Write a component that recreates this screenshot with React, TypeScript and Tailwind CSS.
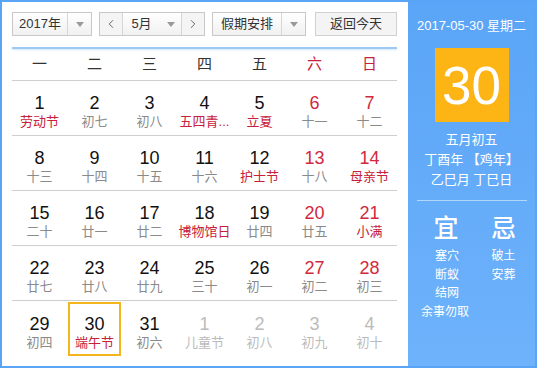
import { ChevronLeft, ChevronRight } from "lucide-react";

type Day = { n: number; sub: string; red?: boolean; subRed?: boolean; other?: boolean; today?: boolean };

const weekDays = ["一", "二", "三", "四", "五", "六", "日"];

const rows: Day[][] = [
    [
        { n: 1, sub: "劳动节", subRed: true },
        { n: 2, sub: "初七" },
        { n: 3, sub: "初八" },
        { n: 4, sub: "五四青...", subRed: true },
        { n: 5, sub: "立夏", subRed: true },
        { n: 6, sub: "十一", red: true },
        { n: 7, sub: "十二", red: true },
    ],
    [
        { n: 8, sub: "十三" },
        { n: 9, sub: "十四" },
        { n: 10, sub: "十五" },
        { n: 11, sub: "十六" },
        { n: 12, sub: "护士节", subRed: true },
        { n: 13, sub: "十八", red: true },
        { n: 14, sub: "母亲节", red: true, subRed: true },
    ],
    [
        { n: 15, sub: "二十" },
        { n: 16, sub: "廿一" },
        { n: 17, sub: "廿二" },
        { n: 18, sub: "博物馆日", subRed: true },
        { n: 19, sub: "廿四" },
        { n: 20, sub: "廿五", red: true },
        { n: 21, sub: "小满", red: true, subRed: true },
    ],
    [
        { n: 22, sub: "廿七" },
        { n: 23, sub: "廿八" },
        { n: 24, sub: "廿九" },
        { n: 25, sub: "三十" },
        { n: 26, sub: "初一" },
        { n: 27, sub: "初二", red: true },
        { n: 28, sub: "初三", red: true },
    ],
    [
        { n: 29, sub: "初四" },
        { n: 30, sub: "端午节", subRed: true, today: true },
        { n: 31, sub: "初六" },
        { n: 1, sub: "儿童节", other: true },
        { n: 2, sub: "初八", other: true },
        { n: 3, sub: "初九", other: true },
        { n: 4, sub: "初十", other: true },
    ],
];

const Caret = () => (
    <span className="w-0 h-0 border-l-[4px] border-r-[4px] border-t-[5px] border-l-transparent border-r-transparent border-t-[#999]" />
);

const DayCell = ({ day }: { day: Day }) => {
    const numColor = day.other ? "text-[#bbbbbb]" : day.red ? "text-[#d2283e]" : "text-[#111]";
    const subColor = day.other ? "text-[#bbbbbb]" : day.subRed ? "text-[#c8203a]" : "text-[#8a8a8a]";
    return (
        <div className="flex items-center justify-center h-full">
            <div
                className={`flex flex-col items-center w-[53px] h-[54px] pt-[9px] border-2 ${
                    day.today ? "border-[#f3b71b]" : "border-transparent"
                }`}
            >
                <span className={`text-[18px] leading-[22px] ${numColor}`}>{day.n}</span>
                <span className={`text-[13px] leading-[18px] mt-[-1px] whitespace-nowrap ${subColor}`}>{day.sub}</span>
            </div>
        </div>
    );
};

const App = () => {
    return (
        <div
            className="w-[537px] h-[368px] border-2 border-[#5aa4f6] flex bg-white"
            style={{ fontFamily: '"Liberation Sans", "Noto Sans CJK SC", sans-serif' }}
        >
            {/* Calendar */}
            <div className="w-[406px] pl-[10px] pr-[11px] pt-[10px]">
                <div className="flex items-center h-[24px] text-[13px] text-[#333]">
                    <div className="flex h-[24px] w-[80px] border border-[#c8c8c8] bg-gradient-to-b from-white to-[#f1f1f1]">
                        <span className="flex-1 flex items-center justify-center">2017年</span>
                        <span className="w-[24px] border-l border-[#d6d6d6] flex items-center justify-center">
                            <Caret />
                        </span>
                    </div>
                    <div className="flex h-[24px] w-[106px] ml-[7px] border border-[#c8c8c8] bg-gradient-to-b from-white to-[#f1f1f1]">
                        <span className="w-[23px] border-r border-[#d6d6d6] flex items-center justify-center bg-[#f4f4f4]">
                            <ChevronLeft size={14} strokeWidth={1.5} className="text-[#555]" />
                        </span>
                        <span className="flex-1 flex items-center justify-center gap-[15px] pl-[2px]">
                            5月
                            <Caret />
                        </span>
                        <span className="w-[23px] border-l border-[#d6d6d6] flex items-center justify-center bg-[#f4f4f4]">
                            <ChevronRight size={14} strokeWidth={1.5} className="text-[#555]" />
                        </span>
                    </div>
                    <div className="flex h-[24px] w-[94px] ml-[7px] border border-[#c8c8c8] bg-gradient-to-b from-white to-[#f1f1f1]">
                        <span className="flex-1 flex items-center justify-center">假期安排</span>
                        <span className="w-[24px] border-l border-[#d6d6d6] flex items-center justify-center">
                            <Caret />
                        </span>
                    </div>
                    <div className="flex h-[24px] w-[82px] ml-[9px] border border-[#d0d0d0] bg-[#f4f4f4] items-center justify-center">
                        返回今天
                    </div>
                </div>
                <div className="mt-[11px] h-[2px] bg-[#9dcaf2] shadow-[0_1px_2px_#cfe6fb]" />
                {/* week header */}
                <div className="grid grid-cols-7 h-[32px] border-b border-[#cfcfcf] text-[15px]">
                    {weekDays.map((w, i) => (
                        <div
                            key={w}
                            className={`flex items-center justify-center ${i > 4 ? "text-[#c8203a]" : "text-[#333]"}`}
                        >
                            {w}
                        </div>
                    ))}
                </div>
                {rows.map((row, r) => (
                    <div
                        key={r}
                        className={`grid grid-cols-7 h-[55px] ${r < rows.length - 1 ? "border-b border-[#cfcfcf]" : ""}`}
                    >
                        {row.map((d, i) => (
                            <DayCell key={i} day={d} />
                        ))}
                    </div>
                ))}
            </div>

            {/* Side panel */}
            <div className="flex-1 bg-gradient-to-b from-[#5aa5f7] to-[#6eb2fb] text-white flex flex-col items-center">
                <div className="mt-[16px] text-[13px] leading-[16px]">2017-05-30 星期二</div>
                <div className="mt-[14px] w-[74px] h-[74px] bg-[#fdb515] flex items-center justify-center text-[53px] leading-none">
                    30
                </div>
                <div className="mt-[8px] text-[13px] leading-[20px] text-center">
                    <div>五月初五</div>
                    <div>丁酉年 【鸡年】</div>
                    <div>乙巳月 丁巳日</div>
                </div>
                <div className="mt-[10px] w-[110px] h-[1px] bg-[#b3d6fb]" />
                <div className="mt-[12px] w-full flex">
                    <div className="w-[76px] flex flex-col items-center">
                        <span className="text-[25px] leading-[30px] font-medium">宜</span>
                    </div>
                    <div className="flex-1 flex flex-col items-center pr-[12px]">
                        <span className="text-[25px] leading-[30px] font-medium">忌</span>
                    </div>
                </div>
                <div className="mt-[4px] w-full flex text-[12px] leading-[18.5px]">
                    <div className="w-[78px] flex flex-col items-center">
                        <span>塞穴</span>
                        <span>断蚁</span>
                        <span>结网</span>
                        <span className="ml-[-4px]">余事勿取</span>
                    </div>
                    <div className="flex-1 flex flex-col items-center pr-[14px]">
                        <span>破土</span>
                        <span>安葬</span>
                    </div>
                </div>
            </div>
        </div>
    );
};

export default App;
